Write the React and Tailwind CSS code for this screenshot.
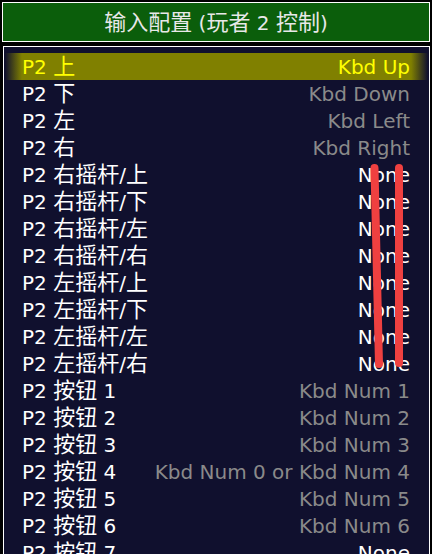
import React from 'react';

const rows = [
  ['P2 上', 'Kbd Up', 'hi'],
  ['P2 下', 'Kbd Down', 'kbd'],
  ['P2 左', 'Kbd Left', 'kbd'],
  ['P2 右', 'Kbd Right', 'kbd'],
  ['P2 右摇杆/上', 'None', 'none'],
  ['P2 右摇杆/下', 'None', 'none'],
  ['P2 右摇杆/左', 'None', 'none'],
  ['P2 右摇杆/右', 'None', 'none'],
  ['P2 左摇杆/上', 'None', 'none'],
  ['P2 左摇杆/下', 'None', 'none'],
  ['P2 左摇杆/左', 'None', 'none'],
  ['P2 左摇杆/右', 'None', 'none'],
  ['P2 按钮 1', 'Kbd Num 1', 'kbd'],
  ['P2 按钮 2', 'Kbd Num 2', 'kbd'],
  ['P2 按钮 3', 'Kbd Num 3', 'kbd'],
  ['P2 按钮 4', 'Kbd Num 0 or Kbd Num 4', 'kbd'],
  ['P2 按钮 5', 'Kbd Num 5', 'kbd'],
  ['P2 按钮 6', 'Kbd Num 6', 'kbd'],
  ['P2 按钮 7', 'None', 'none'],
];

// CJK glyphs render a bit larger than the latin ones in this UI font
function Mixed({ text }) {
  const parts = text.split(/([\u4e00-\u9fff]+)/);
  return parts.map((p, i) =>
    /[\u4e00-\u9fff]/.test(p) ? (
      <span key={i} className="text-[22px]">{p}</span>
    ) : (
      <span key={i}>{p}</span>
    )
  );
}

export default function App() {
  return (
    <div
      className="relative w-[432px] h-[554px] overflow-hidden bg-black p-[2px] text-[20px]"
      style={{ fontFamily: '"DejaVu Sans", "Noto Sans CJK SC", sans-serif' }}
    >
      {/* title bar */}
      <div className="h-[40px] border border-white bg-[#0b5e0b] flex items-center justify-center text-[#e8e8e8] leading-none whitespace-pre">
        <div className="pt-[1px]">
          <Mixed text="输入配置 (玩者 2 控制)" />
        </div>
      </div>

      {/* menu box */}
      <div className="mt-[4px] ml-[1px] h-[520px] border border-white bg-[#10102e] px-[1px] pt-[6px]">
        {rows.map(([label, value, kind], i) => (
          <div
            key={i}
            className={`h-[27px] flex items-center justify-between pl-[17px] pr-[18px] leading-none whitespace-pre ${
              kind === 'hi'
                ? 'bg-[linear-gradient(to_right,#10102e_0px,#808000_17px,#808000_calc(100%-17px),#10102e_100%)] text-[#ffff00]'
                : 'text-white'
            }`}
          >
            <span>
              <Mixed text={label} />
            </span>
            <span className={kind === 'kbd' ? 'text-[#8a8a8a]' : ''}>{value}</span>
          </div>
        ))}
      </div>

      {/* red annotation strokes */}
      <svg className="absolute left-0 top-0 pointer-events-none" width="432" height="554">
        <line x1="374.5" y1="168" x2="379" y2="364" stroke="#ef4040" strokeWidth="8" strokeLinecap="round" />
        <line x1="399" y1="168" x2="399" y2="363" stroke="#ef4040" strokeWidth="8" strokeLinecap="round" />
      </svg>
    </div>
  );
}
